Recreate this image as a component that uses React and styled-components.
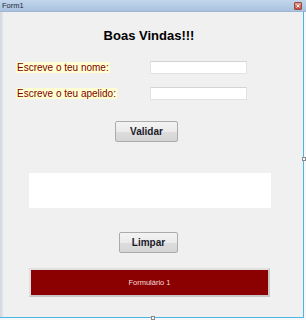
import React from "react";
import styled, { createGlobalStyle } from "styled-components";

const Global = createGlobalStyle`
  html, body { margin: 0; padding: 0; background: #ffffff; overflow: hidden; }
  body { font-family: "Liberation Sans", Arial, sans-serif; }
`;

const Window = styled.div`
  position: relative;
  width: 306px;
  height: 320px;
  display: flex;
  flex-direction: column;
  background: #f7f8fa;
`;

const TitleBar = styled.div`
  height: 12px;
  flex: none;
  display: flex;
  align-items: center;
  justify-content: space-between;
  padding: 0 4px 0 2px;
  background: linear-gradient(#c2d6ec, #a9c2df);
  border-bottom: 1px solid #9fb6d2;
  box-sizing: border-box;
`;

const TitleText = styled.span`
  font-size: 7.5px;
  color: #1b2a3a;
  line-height: 1;
`;

const CloseBtn = styled.div`
  width: 8px;
  height: 8px;
  box-sizing: border-box;
  border: 1px solid #9a4a44;
  border-radius: 1px;
  background: linear-gradient(#e89a92, #c4483c);
  display: flex;
  align-items: center;
  justify-content: center;
`;

const Frame = styled.div`
  flex: none;
  height: 305px;
  display: flex;
`;

const LeftBorder = styled.div`
  width: 3px;
  background: linear-gradient(90deg, #d2d7de, #e4e7eb);
`;

const Client = styled.div`
  width: 300px;
  background: #f0f0f0;
  display: flex;
  flex-direction: column;
`;

const SelLine = styled.div`
  width: 1px;
  background: #4cb6e2;
`;

const BottomLine = styled.div`
  height: 1px;
  width: 304px;
  background: #4cb6e2;
`;

const Heading = styled.h1`
  margin: 16px 8px 0 0;
  font-size: 13px;
  line-height: 15px;
  font-weight: bold;
  text-align: center;
  color: #000;
`;

const FormGrid = styled.div`
  margin: 18px 0 0 13px;
  display: grid;
  grid-template-columns: 134px 97px;
  row-gap: 13px;
  align-items: center;
`;

const Label = styled.span`
  justify-self: start;
  font-size: 10px;
  line-height: 11px;
  color: #800000;
  background: #ffffd2;
  padding: 0 1px;
`;

const TextBox = styled.div`
  height: 13px;
  box-sizing: border-box;
  background: #fff;
  border: 1px solid #e2e2e2;
  border-top-color: #d4d4d4;
`;

const Button = styled.div`
  margin-left: ${(p) => p.$left}px;
  margin-top: ${(p) => p.$top}px;
  width: ${(p) => p.$w}px;
  height: 21px;
  box-sizing: border-box;
  border: 1px solid #ababab;
  border-radius: 2px;
  background: linear-gradient(#f3f3f3 0%, #ebebeb 50%, #dddddd 51%, #d5d5d5 100%);
  display: flex;
  align-items: center;
  justify-content: center;
  font-size: 10px;
  font-weight: bold;
  color: #1a1a2a;
`;

const WhiteBox = styled.div`
  margin: 31px 0 0 26px;
  width: 242px;
  height: 35px;
  background: #ffffff;
`;

const RedPanel = styled.div`
  margin: 15px 0 0 26px;
  width: 241px;
  height: 29px;
  box-sizing: border-box;
  border: 2px solid #c8c8c8;
  border-top-color: #e0e0e0;
  border-left-color: #e0e0e0;
  background: #8b0000;
  display: flex;
  align-items: center;
  justify-content: center;
  font-size: 7.5px;
  color: #f4dede;
`;

const Handle = styled.div`
  position: absolute;
  width: 4px;
  height: 4px;
  box-sizing: border-box;
  background: #fff;
  border: 1px solid #8a8a8a;
  left: ${(p) => p.$x}px;
  top: ${(p) => p.$y}px;
`;

export default function App() {
  return (
    <>
      <Global />
      <Window>
        <TitleBar>
          <TitleText>Form1</TitleText>
          <CloseBtn>
            <svg width="4" height="4" viewBox="0 0 4 4">
              <path d="M0.5 0.5L3.5 3.5M3.5 0.5L0.5 3.5" stroke="#fff" strokeWidth="1" />
            </svg>
          </CloseBtn>
        </TitleBar>
        <Frame>
          <LeftBorder />
          <Client>
            <Heading>Boas Vindas!!!</Heading>
            <FormGrid>
              <Label>Escreve o teu nome:</Label>
              <TextBox />
              <Label>Escreve o teu apelido:</Label>
              <TextBox />
            </FormGrid>
            <Button $left={112} $top={21} $w={63}>Validar</Button>
            <WhiteBox />
            <Button $left={116} $top={24} $w={59}>Limpar</Button>
            <RedPanel>Formulário 1</RedPanel>
          </Client>
          <SelLine />
        </Frame>
        <BottomLine />
        <Handle $x={302} $y={157} />
        <Handle $x={151} $y={316} />
      </Window>
    </>
  );
}
